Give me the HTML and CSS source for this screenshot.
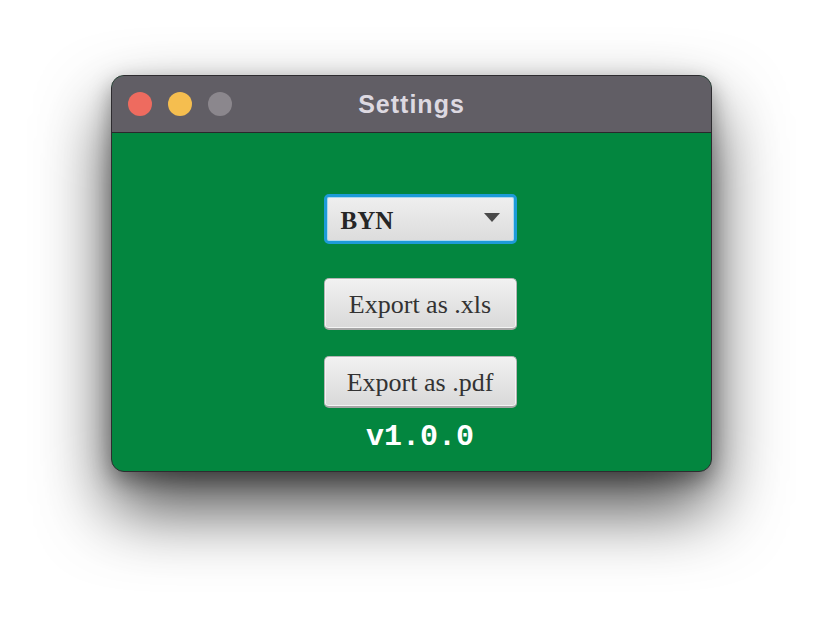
FILE: index.html
```html
<!DOCTYPE html>
<html>
<head>
<meta charset="utf-8">
<link rel="stylesheet" href="styles.css">
</head>
<body>
<div class="window">
  <div class="titlebar">
    <div class="lights">
      <span class="light red"></span>
      <span class="light yellow"></span>
      <span class="light gray"></span>
    </div>
    <div class="title">Settings</div>
  </div>
  <div class="content">
    <div class="combo">
      <span class="combo-text">BYN</span>
      <svg class="arrow" width="16" height="10" viewBox="0 0 16 10"><path d="M0 0 H16 L8 9 Z" fill="#4a4a4a"/></svg>
    </div>
    <div class="btn btn-first">Export as .xls</div>
    <div class="btn btn-second">Export as .pdf</div>
    <div class="version">v1.0.0</div>
  </div>
</div>
</body>
</html>
```
FILE: styles.css
```css
html, body {
  margin: 0;
  padding: 0;
  background: #ffffff;
}
body {
  padding: 75px 0 0 111px;
  width: 824px;
  height: 620px;
  box-sizing: border-box;
  overflow: hidden;
}
.window {
  width: 601px;
  height: 397px;
  box-sizing: border-box;
  border: 1px solid #2e2c30;
  border-radius: 13px;
  overflow: hidden;
  display: flex;
  flex-direction: column;
  background: #03863f;
  box-shadow: 0 36px 70px rgba(0,0,0,0.72), 0 8px 22px rgba(0,0,0,0.35);
}
.titlebar {
  height: 56px;
  flex: none;
  background: #615e65;
  border-bottom: 1px solid #2a282c;
  display: flex;
  align-items: center;
  position: relative;
}
.lights {
  display: flex;
  gap: 16px;
  padding-left: 16px;
}
.light {
  width: 24px;
  height: 24px;
  border-radius: 50%;
  display: block;
}
.red { background: #ee6b5f; }
.yellow { background: #f5be4f; }
.gray { background: #8b878d; }
.title {
  position: absolute;
  left: 0;
  right: 0;
  top: 0;
  bottom: 0;
  display: flex;
  align-items: center;
  justify-content: center;
  font-family: "Liberation Sans", Arial, sans-serif;
  font-weight: bold;
  font-size: 25px;
  letter-spacing: 1px;
  color: #ddd9e1;
}
.content {
  flex: 1;
  display: flex;
  flex-direction: column;
  align-items: center;
  padding-top: 61px;
  padding-left: 17px;
}
.combo {
  width: 193px;
  height: 50px;
  box-sizing: border-box;
  border-radius: 5px;
  border: 3px solid #1d9bd8;
  box-shadow: inset 0 0 0 1px #a9d8ee;
  background: linear-gradient(#efefef, #dcdcdc);
  display: flex;
  align-items: center;
  justify-content: space-between;
  padding: 0 14px 0 14px;
}
.combo-text {
  font-family: "Liberation Serif", "Times New Roman", serif;
  font-weight: bold;
  font-size: 25px;
  color: #262626;
  padding-top: 3px;
}
.arrow {
  display: block;
  margin-top: -2px;
}
.btn {
  width: 193px;
  height: 52px;
  box-sizing: border-box;
  border-radius: 5px;
  border: 1px solid #b4b4b4;
  border-bottom: 2px solid #a6a6a6;
  box-shadow: inset 0 0 0 1px #f4f4f4;
  background: linear-gradient(#f1f1f1, #d9d9d9);
  display: flex;
  align-items: center;
  justify-content: center;
  padding-top: 2px;
  font-family: "Liberation Serif", "Times New Roman", serif;
  font-size: 26px;
  color: #333333;
}
.btn-first { margin-top: 34px; }
.btn-second { margin-top: 26px; }
.version {
  margin-top: 14px;
  font-family: "Liberation Mono", "Courier New", monospace;
  font-weight: bold;
  font-size: 30px;
  line-height: 30px;
  color: #ffffff;
}
```
